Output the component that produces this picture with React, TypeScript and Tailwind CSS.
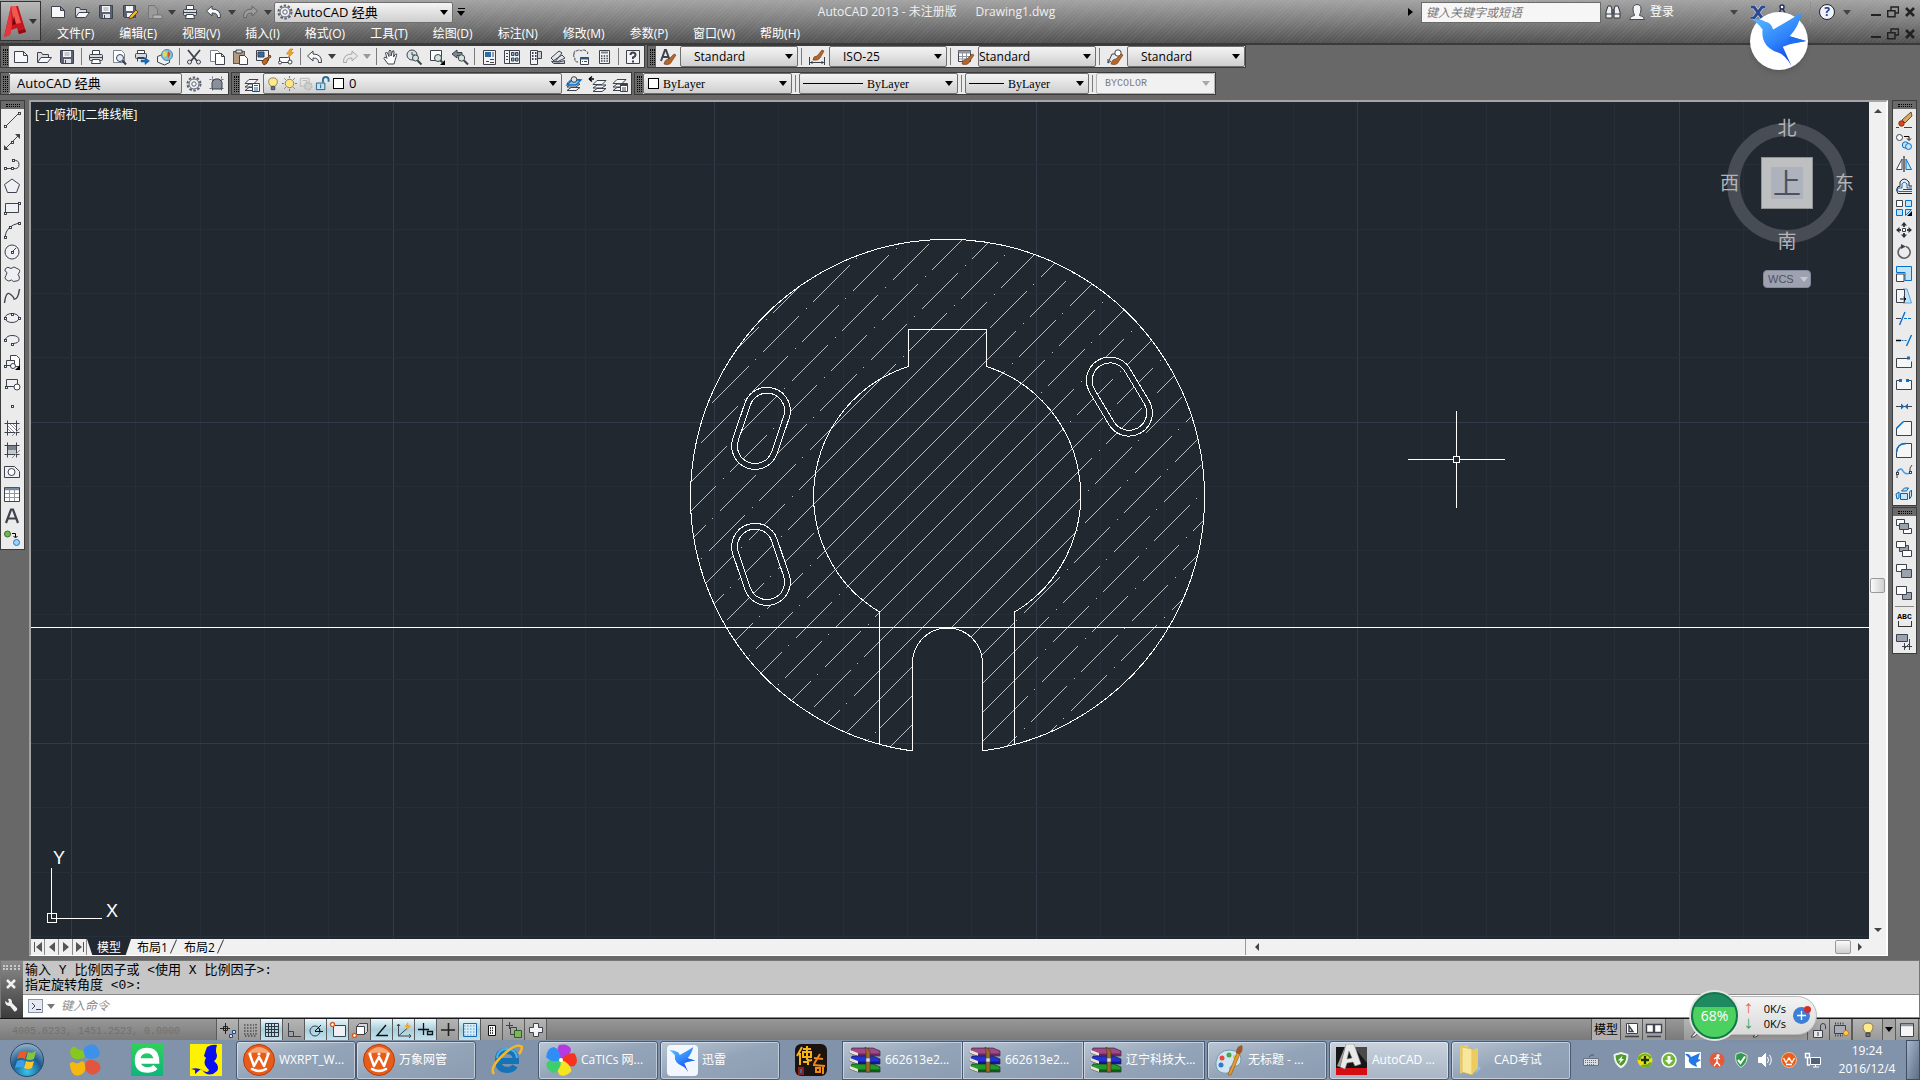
import type { ReactNode } from "react";
import { clsx } from "clsx";

const icons: Record<string, ReactNode> = {
  new: <path d="M1.5 2.5h9l4 4v7h-13zM10.5 2.5v4h4" fill="#f7f8fa" />,
  open: (
    <>
      <path d="M1.5 13V3.5h4l1 2h6V8" fill="#d9dde3" />
      <path d="M1.5 13.5L5 8.5h10.500l-4 5z" fill="#f7f8fa" />
    </>
  ),
  save: (
    <>
      <path d="M1.500 1.500h13v13h-12l-1-1z" fill="#5a6170" />
      <path d="M4 2h8v6H4z" fill="#f3f4f6" stroke="none" />
      <path d="M5.500 4h5M5.500 6h5" stroke="#9aa0aa" />
      <path d="M5 10h7v4H5z" fill="#dfe2e7" stroke="none" />
      <path d="M6.500 11v3" />
    </>
  ),
  saveas: (
    <>
      <path d="M1.500 1.500h12v12h-11l-1-1z" fill="#5a6170" />
      <path d="M4 2h7v5H4zM5 9h5v4H5z" fill="#f3f4f6" stroke="none" />
      <path d="M7 15l1-3 6-6 2 2-6 6z" fill="#f2b92d" stroke="#7a4a12" />
    </>
  ),
  plotoff: (
    <>
      <path d="M2.500 1.500h6l3 4v9h-9z" fill="#9b9b9b" stroke="#767676" />
      <path d="M7 11h9v3.500H7z" fill="#b4b4b4" stroke="#767676" />
    </>
  ),
  print: (
    <>
      <path d="M4.500 5V1.500h7V5" fill="#fff" />
      <rect x="1.500" y="5.500" width="13" height="6" rx="1" fill="#d5d8de" />
      <path d="M1.500 8.500h13" />
      <path d="M3.500 14.500l1-4h7l1 4z" fill="#fff" />
    </>
  ),
  preview: (
    <>
      <path d="M2.500 1.500h8l3 3v9h-11z" fill="#fff" stroke="#7d828c" />
      <circle cx="9" cy="9" r="3.500" fill="#dceefb" />
      <path d="M11.500 11.500l3.500 4" strokeWidth="2" />
    </>
  ),
  publish: (
    <>
      <path d="M3.500 4V1.500h7V4" fill="#fff" />
      <rect x="1.500" y="4.500" width="11" height="5" rx="1" fill="#d5d8de" />
      <path d="M3.500 12.500v-4h7" />
      <path d="M7 11h4V8.500l4.500 3.500-4.500 3.500V13H7z" fill="#0a6fc9" stroke="#07549a" strokeWidth=".5" />
    </>
  ),
  globe: (
    <>
      <path d="M.500 7.500l5-2 7 3v5l-5 2.500-7-3z" fill="#eef0f3" />
      <circle cx="10" cy="6" r="5.500" fill="#7fc4e6" stroke="#4a88a8" />
      <path d="M6 3q3-2 4 1t-3 4q-2-2-1-5z" fill="#e4d94b" stroke="none" />
      <path d="M11 2q3 2 2 4l-2 4q-1-4 0-8z" fill="#d9512e" stroke="none" />
    </>
  ),
  cut: (
    <>
      <path d="M2 1l9 11M14 1L5 12" strokeWidth="1.800" />
      <circle cx="3.500" cy="13" r="2" />
      <circle cx="12.500" cy="13" r="2" />
    </>
  ),
  copy: (
    <>
      <path d="M1.500 1.500h7l2 2v9h-9z" fill="#fff" stroke="#7d828c" />
      <path d="M6.500 4.500h6l3 3v8h-9zM12.500 4.500v3h3" fill="#fff" />
    </>
  ),
  paste: (
    <>
      <rect x="1.500" y="2.500" width="11" height="12" fill="#b39a7d" stroke="#6b5844" />
      <path d="M4 1h6v3H4z" fill="#dfe2e7" />
      <path d="M7.500 6.500h5l3 3v6h-8z" fill="#fff" />
    </>
  ),
  match: (
    <>
      <path d="M1.500 1.500h12v10h-12z" fill="#eceff3" />
      <path d="M3 3h6v5H3z" fill="#2f6da8" />
      <path d="M7 13q3-5 5-4l3-3 1 2-3 2q0 5-4 6z" fill="#c06a24" stroke="#7d3f10" />
    </>
  ),
  block: (
    <>
      <path d="M1.500 8.500h10v5h-10z" fill="#fff" />
      <circle cx="12" cy="13" r="2" fill="#fff" />
      <circle cx="2" cy="13.500" r="1.500" fill="#fff" />
      <path d="M12 0L8.500 5h3L10 9l5.500-5.500h-3L15 0z" fill="#f5a623" stroke="#c9730f" strokeWidth=".6" />
    </>
  ),
  undo: <path d="M.500 7L6 2v3q9 0 8.500 8.500h-3Q12 9 6 9v3z" fill="#f7f8fa" />,
  redo: <path d="M15.500 7L10 2v3Q1 5 1.500 13.500h3Q4 9 10 9v3z" fill="#e8e8e8" stroke="#a7a7a7" />,
  redodark: <path d="M15.500 7L10 2v3Q1 5 1.500 13.500h3Q4 9 10 9v3z" fill="#9c9c9c" stroke="#666" />,
  pan: (
    <path
      d="M5 15L1 9.500q0-2 2-1l1 1L2.500 4q1-2 2 0L6 7.500V2q1-1.800 2 0v5l1.500-5q1.500-1 1.500 1l-.500 5 2-3q2-.500 1 1.500L12 11.500 11 15z"
      fill="#fff"
    />
  ),
  zoomrt: (
    <>
      <circle cx="6" cy="6" r="5" fill="#d8e3ea" />
      <path d="M6 3v3h3" />
      <circle cx="9.500" cy="9" r="3" fill="#cfe8d8" />
      <path d="M11.500 11.500l4 4" strokeWidth="2" />
    </>
  ),
  zoomwin: (
    <>
      <path d="M1.500 1.500h11v10h-11z" fill="#fff" />
      <circle cx="9" cy="9" r="3.500" fill="#cfe8d8" />
      <path d="M11.500 11.500l2 2" strokeWidth="2" />
      <path d="M16 11v5h-5z" fill="#000" stroke="none" />
    </>
  ),
  zoomprev: (
    <>
      <path d="M0 5l5-4v2.500h5v3H5V9z" fill="#7f858f" />
      <circle cx="9.500" cy="9" r="3.200" fill="#cfe8d8" />
      <path d="M12 11.500l4 4" strokeWidth="2" />
    </>
  ),
  props: (
    <>
      <path d="M2.500 1.500h12v14h-12z" fill="#f3f4f6" />
      <path d="M4 3h6v5H4z" fill="#2f6da8" stroke="none" />
      <path d="M12 3v5M5 12.500h3M9 10.500h4M9 13.500h4" />
    </>
  ),
  dcenter: (
    <>
      <path d="M.500 1.500h15v13H.500z" fill="#f3f4f6" />
      <path d="M5.500 2v12M2 4.500h2M2 7.500h2M2 10.500h2" />
      <path d="M7.500 3.500h2.500v3H7.500zM11.500 3.500H14v3h-2.500zM7.500 9h2.500v3H7.500zM11.500 9H14v3h-2.500z" fill="#8ab0d0" />
    </>
  ),
  palette: (
    <>
      <path d="M3.500 1.500h7v14h-7z" fill="#f3f4f6" />
      <path d="M10.500 2.500h4v7h-4z" fill="#c8ccd3" />
      <path d="M5 4h1.500M8 4h1.500M5 7h1.500M8 7h1.500M5 10h1.500M8 10h1.500" strokeWidth="2" />
    </>
  ),
  sheet: (
    <>
      <path d="M1 9L9 2l3 2-7 9zM3 12l9-6 3 3-8 4z" fill="#e4e7eb" />
      <path d="M1.500 12.500l2 2h11v-3L9 13z" fill="#c8ccd3" />
    </>
  ),
  markup: (
    <>
      <path d="M1 5q0-4 3-3 2-2 4 0 3-2 5 0 3 1 1 4M1 5q-1 3 1 4-1 4 3 4" strokeDasharray="3 1" />
      <path d="M7.500 8.500h8v7h-8z" fill="#fff" />
      <path d="M7.500 9.500h8" stroke="#2f5b8a" strokeWidth="2" />
      <path d="M9 12.500h1M11 12.500h3" />
    </>
  ),
  calc: (
    <>
      <path d="M3.500 1.500h10v13h-10z" fill="#f3f4f6" />
      <path d="M5 3.500h7" strokeWidth="2" stroke="#7d828c" />
      <path d="M5 7h7M5 9.500h7M5 12h7" strokeDasharray="1.500 1.200" strokeWidth="1.500" />
    </>
  ),
  help: (
    <>
      <path d="M1.500 1.500h13v13h-13z" fill="#f3f4f6" />
      <path d="M5.500 6q0-2.500 2.500-2.500T10.500 6Q10.500 7.500 8 8.500V10M8 11.500v2" strokeWidth="2" />
    </>
  ),
  textstyle: (
    <>
      <path d="M1 12L5 1h1l4 11M3 8h5" strokeWidth="2" />
      <Brush />
    </>
  ),
  dimstyle: (
    <>
      <path d="M.500 8v8M15.500 8v8M1 13.500h14M3 12v3M13 12v3" />
      <path d="M4 11q0-4 4-4l5-6 2 1-4 7q-2 3-7 2z" fill="#b4672c" stroke="#6d3711" strokeWidth=".6" />
    </>
  ),
  tablestyle: (
    <>
      <path d="M.500 1.500h12v11H.500z" fill="#fff" />
      <path d="M.500 3h12" strokeWidth="3" stroke="#9298a2" />
      <path d="M1 7.500h11M1 10h11M4.500 4v8M8.500 4v8" stroke="#9298a2" />
      <Brush />
    </>
  ),
  leaderstyle: (
    <>
      <path d="M1 14L5 5h4M1 14v-4M1 14l3-2" />
      <circle cx="11" cy="4" r="3.200" fill="#fff" />
      <Brush />
    </>
  ),
  gear: (
    <>
      <circle cx="8" cy="8" r="6.500" strokeWidth="2" strokeDasharray="2.400 1.680" stroke="#596070" />
      <circle cx="8" cy="8" r="5" fill="#f1f2f4" stroke="#596070" />
      <circle cx="8" cy="8" r="2.200" fill="#fafafa" stroke="#596070" />
    </>
  ),
  wssettings: (
    <>
      <path d="M.500 3.500h15M.500 12.500h15M3.500.500v15M12.500.500v15" strokeDasharray="2 1" stroke="#6c717b" />
      <path d="M3 13V6l3-3h4l3 3v7z" fill="#8a909b" />
    </>
  ),
  layerprops: (
    <>
      <Layers />
      <path d="M8.500 7.500h7v8h-7z" fill="#fff" />
      <path d="M10 9.500h4M10 12h4M10 14h4" stroke="#0a6fc9" />
    </>
  ),
  bulb: (
    <>
      <path d="M8 1q5 0 5 4.500 0 2-2.500 5h-5Q3 7.500 3 5.500 3 1 8 1z" fill="#ffe98a" stroke="#8a7c49" />
      <path d="M6 11h4v3.500H6z" fill="#6a7382" />
    </>
  ),
  sun: (
    <>
      <circle cx="8" cy="8" r="4.500" fill="#ffe77d" stroke="#7d8087" />
      <path d="M8 0v2M8 14v2M0 8h2M14 8h2M2.500 2.500L4 4M12 12l1.500 1.500M13.500 2.500L12 4M2.500 13.500L4 12" stroke="#7d6d3a" />
    </>
  ),
  vpfreeze: (
    <g stroke="#b5b5b5">
      <path d="M1.500 1.500h10v8h-3M1.500 1.500v9h4M4 4h5v4" />
      <circle cx="10.500" cy="10.500" r="4" fill="#cfcfcf" strokeDasharray="2 1" strokeWidth="2" />
    </g>
  ),
  unlock: (
    <>
      <path d="M8.500 7V4q0-3 3-3t3 3v2" strokeWidth="2" stroke="#2d6d92" />
      <path d="M1.500 7.500h9v7h-9z" fill="#bfe4f7" stroke="#1c5f88" />
      <path d="M6 9v4" stroke="#1c5f88" />
    </>
  ),
  layercur: (
    <>
      <Layers />
      <path d="M1 9l5-5h9l-5 5z" fill="#8cc7ee" stroke="#0a6fc9" strokeWidth="1.300" />
      <circle cx="8" cy="3.500" r="2.800" fill="#e0e3e8" />
    </>
  ),
  layerprev: (
    <>
      <g transform="translate(3 1)">
        <Layers />
      </g>
      <path d="M0 3h5M0 3l3-2.500M0 3l3 2.500" stroke="#000" strokeWidth="1.400" />
    </>
  ),
  layerstate: (
    <>
      <Layers />
      <path d="M8.500 7.500h7v8h-7z" fill="#fff" />
      <path d="M8.500 9h7" strokeWidth="2" />
      <path d="M10 12h4M10 14h4" />
    </>
  ),
  line: (
    <>
      <path d="M2 14L14 2" />
      <Node x={1} y={14} />
      <Node x={15} y={1} />
    </>
  ),
  xline: (
    <>
      <path d="M1 15L15 1" />
      <path d="M0 11v5h5zM11 0h5v5z" fill="#3d424d" stroke="none" />
      <Node x={8} y={8} />
    </>
  ),
  pline: (
    <>
      <path d="M1 12.500h8M9 4.500q6-1 6 4t-6 4" />
      <Node x={1} y={12} />
      <Node x={8} y={12} />
      <Node x={9} y={4} />
    </>
  ),
  polygon: <path d="M8 1l7.500 5.500-3 8h-9l-3-8z" fill="#eef0f3" />,
  rect: (
    <>
      <path d="M1.500 3.500h13v9h-13z" fill="#eef0f3" />
      <Node x={1} y={13} />
      <Node x={15} y={3} />
    </>
  ),
  arc: (
    <>
      <path d="M1 15Q2 4 15 1" />
      <Node x={1} y={15} />
      <Node x={6} y={5} />
      <Node x={15} y={1} />
    </>
  ),
  circle: (
    <>
      <circle cx="8" cy="8" r="7" fill="#eef0f3" />
      <path d="M8 8l4-4" />
      <Node x={8} y={8} />
    </>
  ),
  cloud: (
    <path
      d="M3 6.500Q-.500 5 1.500 2.500T7 2.500q3-3 6 0 4 1 2 4.500-2 1.500 0 3 1.500 5-3 5-3 1.500-4.500-1-3 2-5 0Q-.500 12 2 9.500z"
      fill="#eef0f3"
    />
  ),
  spline: <path d="M.500 15Q2 3 6 6t4 5q4 1 5.500-10" strokeWidth="1.400" />,
  ellipse: (
    <>
      <ellipse cx="8" cy="8" rx="7" ry="4.500" fill="#eef0f3" />
      <Node x={1} y={8} />
      <Node x={8} y={4} />
      <Node x={15} y={8} />
    </>
  ),
  earc: (
    <>
      <path d="M1 8q2-5 8-4.500t6 4.500q0 3-6 3.500" fill="#eef0f3" />
      <Node x={1} y={8} />
      <Node x={8} y={12} />
    </>
  ),
  insert: (
    <>
      <path d="M6.500 1.500h6l3 3v8h-9z" fill="#fff" />
      <path d="M2.500 6.500h8v5h-8z" fill="#eef0f3" />
      <circle cx="9" cy="12" r="2.500" fill="#fff" />
      <Node x={1} y={12} />
      <path d="M16 11v5h-5z" fill="#000" stroke="none" />
    </>
  ),
  mkblock: (
    <>
      <path d="M2.500 3.500h11v7h-11z" fill="#eef0f3" />
      <circle cx="13" cy="11" r="3" fill="#fff" />
      <Node x={2} y={11} />
    </>
  ),
  point: <Node x={8} y={8} />,
  hatch: (
    <>
      <path d="M3.500 3.500h9v9h-9z" fill="#fff" />
      <path d="M4 6l6 6M4 9l3 3M6 4l6 6M9 4l3 3" stroke="#8b909a" />
      <path d="M.500 3.500h15M.500 12.500h15M3.500.500v15M12.500.500v15" />
      <path d="M16 8l-8 8" stroke="#8b909a" />
    </>
  ),
  gradient: (
    <>
      <path d="M3 3h10v5H3z" fill="#7c828d" stroke="none" />
      <path d="M3 8h10v5H3z" fill="#c3c8cf" stroke="none" />
      <path d="M.500 3.500h15M.500 12.500h15M3.500.500v15M12.500.500v15" />
      <path d="M16 8l-8 8" stroke="#8b909a" />
    </>
  ),
  region: (
    <>
      <path d="M.500 2.500h10l5 5v6H.500z" fill="#eef0f3" />
      <circle cx="7.500" cy="8" r="3.500" fill="#fff" />
    </>
  ),
  table: (
    <>
      <path d="M.500 1.500h15v14H.500z" fill="#fff" />
      <path d="M1 3h14" strokeWidth="2.500" stroke="#7688a2" />
      <path d="M1 7.500h14M1 11.500h14M5.500 4v11M10.500 4v11" stroke="#9298a2" />
    </>
  ),
  mtext: <path d="M2 15L7 1.500h2L14 15M4.500 10.500h7" strokeWidth="2.200" />,
  addsel: (
    <>
      <circle cx="3.500" cy="4" r="3" fill="#72b558" stroke="#386d24" />
      <circle cx="12.500" cy="12.500" r="3" fill="#9ad3f7" stroke="#1f7ac0" />
      <path d="M8 3.500h3.500V7M9.500 6l2 2 2-2" stroke="#000" />
    </>
  ),
  erase: (
    <>
      <path d="M15 0l1 4-7 7-3-3z" fill="#d9a766" stroke="#6f4b1d" />
      <circle cx="5.500" cy="11.500" r="2.700" fill="#d5481b" stroke="#8e2b0b" />
      <path d="M0 15.500h3M8 15.500h8" />
    </>
  ),
  copyobj: (
    <>
      <circle cx="3.500" cy="3.500" r="3" fill="#fff" />
      <path d="M8 2.500h5v3M11 4.500l2 2 2-2" stroke="#000" />
      <circle cx="9.500" cy="11" r="3.200" fill="#bfe4f7" stroke="#0a6fc9" />
      <circle cx="12.500" cy="12.500" r="3" fill="#bfe4f7" stroke="#0a6fc9" />
    </>
  ),
  mirror: (
    <>
      <path d="M6 3v10.500H.500z" fill="#fff" />
      <path d="M10 3v10.500h5.500z" fill="#bfe4f7" stroke="#0a6fc9" />
      <path d="M8 0v16" stroke="#000" />
    </>
  ),
  offset: (
    <>
      <path d="M16 13.500H3q-3-1-1-3.500h4V6q2-3.500 5 0v4h5" stroke="#0a6fc9" />
      <path d="M16 15.500H2q-3-4 0-7h2V4q4-6 9 0v4h3" stroke="#20242c" />
      <path d="M16 11.500H7" />
    </>
  ),
  array: (
    <>
      <path d="M.500.500h6v6h-6z" fill="#fff" />
      <path d="M9.500.500h6v6h-6zM.500 9.500h6v6h-6zM9.500 9.500h6l-6 6z" fill="#bfe4f7" stroke="#0a6fc9" />
      <path d="M16 11v5h-5z" fill="#000" stroke="none" />
    </>
  ),
  move: (
    <>
      <path d="M8 1v4M8 11v4M1 8h4M11 8h4" strokeWidth="2" />
      <path d="M5 3.500L8 0l3 3.500zM5 12.500L8 16l3-3.500zM3.500 5L0 8l3.500 3zM12.500 5L16 8l-3.500 3z" fill="#2d323c" stroke="none" />
      <path d="M6.500 6.500h3v3h-3z" fill="#fff" />
    </>
  ),
  rotate: (
    <>
      <path d="M10 2.500a6 6 0 1 1-4.500.300" strokeWidth="1.600" stroke="#5b606a" />
      <path d="M5 0l5 2.500L5 5z" fill="#3d424d" stroke="none" />
    </>
  ),
  scale: (
    <>
      <path d="M.500.500h15v14H9V6.500H.500z" fill="#bfe4f7" stroke="#0a6fc9" />
      <path d="M.500 8h7.500v7.500H.500z" fill="#fff" />
    </>
  ),
  stretch: (
    <>
      <path d="M7 1h4l4.500 14H7z" fill="#bfe4f7" stroke="#5ba3d8" />
      <path d="M.500 1.500h8v13h-8z" fill="#f5f6f8" />
      <path d="M4 11h5M7.500 9l2.500 2-2.500 2" stroke="#000" />
    </>
  ),
  trim: (
    <>
      <path d="M0 8.500h5" />
      <path d="M8 8.500h8" stroke="#0a6fc9" strokeDasharray="3 1" />
      <path d="M3.500 15L9 2" stroke="#0a6fc9" strokeWidth="1.400" />
    </>
  ),
  extend: (
    <>
      <path d="M0 8.500h5" stroke="#000" strokeWidth="1.500" />
      <path d="M5.500 8.500h6" stroke="#0a6fc9" strokeDasharray="2 1" />
      <path d="M10.500 14L15.500 3" stroke="#0a6fc9" strokeWidth="1.400" />
    </>
  ),
  breakpt: (
    <>
      <path d="M12 4.500H.500v9h15v-6" fill="#f5f6f8" />
      <path d="M11 2.500h3v3h-3z" fill="#0a6fc9" stroke="none" />
    </>
  ),
  breakln: (
    <>
      <path d="M3 4.500H.500v9h15v-9H13" fill="#f5f6f8" />
      <path d="M3 3h3v3H3zM10 3h3v3h-3z" fill="#0a6fc9" stroke="none" />
    </>
  ),
  join: (
    <>
      <path d="M0 8.500h16" />
      <path d="M5 5.500l3.500 3-3.500 3zM12 5.500l-3.500 3 3.500 3z" fill="#0a6fc9" stroke="none" />
    </>
  ),
  chamfer: (
    <>
      <path d="M.500 15.500V8l7-6.500h8v14z" fill="#f5f6f8" />
      <path d="M.500 8.500l7-7" stroke="#0a6fc9" strokeWidth="1.500" />
    </>
  ),
  fillet: (
    <>
      <path d="M.500 15.500v-5Q1 1.500 10 1.500h5.500v14z" fill="#f5f6f8" />
      <path d="M.500 10.500Q1 1.500 10 1.500" stroke="#0a6fc9" strokeWidth="1.500" />
    </>
  ),
  blend: (
    <>
      <path d="M1 14V8l2-3M14 10V4l2-3" />
      <path d="M2 7q3-4 5 0t7 2" stroke="#3f9bea" strokeWidth="1.500" />
      <Node x={1} y={9} />
      <Node x={14} y={8} />
    </>
  ),
  explode: (
    <path d="M4.500 7.500h7v6h-7zM5.500 5l3-3h4l-2 3zM13.500 6l2-2v6l-2 3zM0 8l3-2v6l-2 1z" fill="#c4e8fa" stroke="#0a62a8" />
  ),
  front: (
    <>
      <path d="M.500.500h8v6h-8zM7.500 9.500h8v5h-8z" fill="#fff" />
      <path d="M3.500 4.500h9v6h-9z" fill="#9aa2ad" />
    </>
  ),
  back: (
    <>
      <path d="M3.500 4.500h9v6h-9z" fill="#9aa2ad" />
      <path d="M.500.500h9v6h-9zM6.500 9.500h9v6h-9z" fill="#fff" />
    </>
  ),
  above: (
    <>
      <path d="M.500 1.500h10v7h-10z" fill="#fff" />
      <path d="M5.500 6.500h10v8h-10z" fill="#9aa2ad" />
    </>
  ),
  under: (
    <>
      <path d="M6.500 7.500h9v7h-9z" fill="#9aa2ad" />
      <path d="M.500 1.500h10v8h-10z" fill="#fff" />
    </>
  ),
  hatchback: (
    <>
      <path d="M.500.500h11v7h-11z" fill="#9aa2ad" />
      <path d="M6 12.500h10M8.500 9v7M13.500 5v11M8 15l6-6" />
    </>
  ),
  infer: (
    <>
      <path d="M0 6.500h10M5.500 1v11M3.500 4.500h4v4h-4z" stroke="#222" />
      <path d="M9.500 12.500h3v3h-3zM12.500 8.500h3v3h-3z" fill="#d5e4f5" stroke="#234a7d" />
    </>
  ),
  snap: <path d="M2 3h10M2 6h10M2 9h10M2 12h10M14 2v11M3 14h11" strokeDasharray="1.500 1.500" stroke="#222" />,
  grid: <path d="M1.500 1.500h13v13h-13zM4.500 1v14M7.500 1v14M10.500 1v14M1 4.500h14M1 7.500h14M1 10.500h14" stroke="#30343c" />,
  ortho: <path d="M2.500 1v13.500H15M2.500 9.500h5v5" />,
  polar: (
    <>
      <circle cx="7" cy="9" r="5" />
      <path d="M7 9l6-6M7 9.500h8M10.500 5.500q1.500 2 1 4" stroke="#111" />
    </>
  ),
  osnap: (
    <>
      <path d="M3.500 3.500h12v11h-12z" fill="#eef0f3" />
      <circle cx="2.500" cy="2.500" r="2" fill="#fff" stroke="#d65a1f" strokeWidth="1.400" />
    </>
  ),
  osnap3d: (
    <>
      <path d="M4.500 4.500l3-3h8v8l-3 3h-8z" fill="#d5d8de" />
      <path d="M4.500 4.500h8v8h-8z" fill="#fff" />
      <circle cx="2.500" cy="13.500" r="2" fill="#fff" stroke="#d65a1f" strokeWidth="1.400" />
    </>
  ),
  otrack: <path d="M12 3L3 13.500h11" stroke="#111" strokeWidth="1.400" />,
  ducs: (
    <>
      <path d="M2.500 2v12h12M1 4l1.500-2L4 4M2.500 14l9-8M13 12l2 2-2 2" />
      <path d="M12 0L8.500 5h3L10 9l5.500-5.500h-3z" fill="#f5a623" stroke="none" />
    </>
  ),
  dyn: <path d="M5.500 1v12M0 7.500h11M9.500 9.500h5v3h-5z" stroke="#111" strokeWidth="1.300" />,
  lwt: <path d="M8.500 1v13M1 8h14" stroke="#222" strokeWidth="1.600" />,
  tpy: (
    <>
      <path d="M1.500 1.500h13v13h-13z" fill="#d9edf9" stroke="#1b68b3" />
      <path d="M2 4h12M2 7h12M2 10h12M2 13h12" stroke="#7fb2dc" strokeWidth="1.500" strokeDasharray="1.500 1.500" />
    </>
  ),
  qp: (
    <>
      <path d="M4.500 3.500h7v10h-7z" fill="#fff" stroke="#111" />
      <path d="M6 6h4M6 8.500h4M6 11h4" stroke="#111" strokeDasharray="1 1" strokeWidth="1.400" />
    </>
  ),
  cycle: (
    <>
      <path d="M3.500 0v7M0 3.500h7" />
      <path d="M4.500 5.500h6v7h-6z" />
      <path d="M8.500 8.500h7v7h-7z" fill="#7fb562" stroke="#2c6417" />
    </>
  ),
  annomon: <path d="M5.500 1.500h5v4h4v5h-4v4h-5v-4h-4v-5h4z" fill="#f3f4f6" />,
  qvl: (
    <>
      <path d="M2.500 1.500h11v10h-11z" fill="#fff" />
      <path d="M5 9.500V4l4 5.500zM1 14.500h14" strokeWidth="1.400" />
    </>
  ),
  qvd: <path d="M.500 2.500h7v8h-7zM8.500 2.500h7v8h-7zM1 14.500h14" fill="#fff" strokeWidth="1.400" />,
  padlock: (
    <>
      <path d="M9.500 8V4q0-2.500 2.500-2.500T14.500 4v3" />
      <path d="M2.500 8.500h9v7h-9z" fill="#e6e8ec" />
      <path d="M7 10v4" />
    </>
  ),
  hardware: (
    <>
      <path d="M1.500 3.500h11v8h-11z" fill="#a7adb7" />
      <path d="M2 1.500h10M2 13.500h8" strokeDasharray="1 1.500" strokeWidth="2" />
      <circle cx="13" cy="11" r="2.500" fill="#ffcf55" stroke="#c47b10" />
    </>
  ),
  clean: (
    <>
      <path d="M1.500 1.500h13v13h-13z" fill="#f5f5f5" />
      <path d="M2 3h12" strokeWidth="2.500" stroke="#9298a2" />
    </>
  ),
  tool: <path d="M2 15L12 3l3 3-10 9z" fill="#e6e8ec" />,
  keyboard: (
    <>
      <path d="M6 5q2-3 5-2" stroke="#4b5563" />
      <path d="M.500 6.500h15v7H.500z" fill="#d9dde4" stroke="#6c7380" />
      <path d="M2 8.500h12M2 10.500h12M4 12.500h8" stroke="#6c7380" strokeDasharray="1 1" />
    </>
  ),
  shield: (
    <>
      <path d="M8 .500l7 2q0 10-7 13.500Q1 12.500 1 2.500z" fill="#fff" stroke="#e5efe5" />
      <path d="M8 2l5.500 1.500Q13.500 11 8 14 2.500 11 2.500 3.500z" fill="#4e9a2c" stroke="none" />
      <path d="M9.500 3.500L5 8.500h2.500L6 12l5-5H8.500z" fill="#fff" stroke="none" />
    </>
  ),
  plus360: (
    <>
      <circle cx="8" cy="8" r="7.500" fill="#f4d91c" stroke="none" />
      <path d="M1 5Q8-2 15 5q-4 4-5 3H1zM3 14q5-3 12-4-2 6-7 5.500z" fill="#67b21e" stroke="none" />
      <circle cx="8" cy="8" r="4.500" fill="#f4e03a" stroke="none" />
      <path d="M8 4v8M4 8h8" stroke="#14380a" strokeWidth="2.400" />
    </>
  ),
  download: (
    <>
      <circle cx="8" cy="8" r="7" fill="#6fb832" stroke="#f4faee" strokeWidth="1.600" />
      <path d="M6.500 4h3v4H12l-4 4.500L4 8h2.500z" fill="#fff" stroke="none" />
    </>
  ),
  birdtray: (
    <>
      <path d="M0 0h16v16H0z" fill="#fff" stroke="none" />
      <path d="M0 2q4-1 6 3l9-4-2 6 3 1-5 3 1 4Q2 12 4 6z" fill="#2278e8" stroke="none" />
    </>
  ),
  runner: (
    <>
      <circle cx="8" cy="8" r="7.500" fill="#e4593a" stroke="none" />
      <circle cx="9" cy="3.500" r="1.600" fill="#fff" stroke="none" />
      <path d="M5 7l3-2 3 2M8 5v5l-3 4M8 10l3 4" stroke="#fff" strokeWidth="1.300" />
    </>
  ),
  guard: (
    <>
      <path d="M3 2l5-1.500L14 3q1 8-6 12.500Q1 11 3 2z" fill="#2f9a4b" stroke="#d6e3d8" />
      <path d="M5 8l2.500 3L12 4.500" stroke="#fff" strokeWidth="2" />
    </>
  ),
  speaker: (
    <g stroke="#fff">
      <path d="M1.500 5.500h3l4-4v13l-4-4h-3z" fill="#fff" />
      <path d="M10.500 5q2 3 0 6M12.500 3q3.500 5 0 10" />
    </g>
  ),
  wtray: (
    <>
      <circle cx="8" cy="8" r="7.500" fill="#e9601c" stroke="#f6b38c" />
      <path d="M2.500 6L5 10.500 8 6l3 4.500L13.500 6M5 12.500h6" stroke="#fff" strokeWidth="1.300" />
    </>
  ),
  network: (
    <g stroke="#fff">
      <path d="M5.500 5.500h10v7h-10zM8 15h6M10.500 13v2" fill="#4f6277" />
      <path d="M.500 1.500h4v4h-4zM2.500 6v7H5" strokeWidth="1.400" />
    </g>
  ),
};

function Brush() {
  return <path d="M4 15q1-5 5-5l5-5 2 1-4 6q-2 5-8 3z" fill="#b4672c" stroke="#6d3711" strokeWidth=".6" />;
}

function Layers() {
  return (
    <g fill="#f5f6f8">
      <path d="M1 14.500l4-3h9l-4 3z" />
      <path d="M1 11l4-3h9l-4 3z" />
      <path d="M1 7.500l4-4h9l-4 4z" />
    </g>
  );
}

function Node({ x, y }: { x: number; y: number }) {
  return <rect x={x - 0.5} y={y - 0.5} width="2" height="2" fill="#fff" stroke="#2d323c" strokeWidth=".9" />;
}

const Icon = ({ name, className = "size-4" }: { name: string; className?: string }) => (
  <svg viewBox="0 0 16 16" fill="none" stroke="#3d424d" className={clsx("shrink-0 overflow-visible", className)} aria-hidden="true">
    {icons[name]}
  </svg>
);

const Arrow = ({ className = "border-t-[#333]" }: { className?: string }) => (
  <span className={clsx("block size-0 border-x-4 border-t-5 border-x-transparent", className)} />
);

const GripH = () => (
  <div className="flex w-2 shrink-0 items-center justify-center gap-px self-stretch bg-[#6a6a6a]">
    <span className="h-4 border-l border-dotted border-black" />
    <span className="h-4 border-l border-dotted border-black" />
    <span className="h-4 border-l border-dotted border-black" />
  </div>
);

const GripV = () => (
  <div className="flex h-2 shrink-0 flex-col items-center justify-center gap-px bg-[#6a6a6a]">
    <span className="w-[14px] border-t border-dotted border-black" />
    <span className="w-[14px] border-t border-dotted border-black" />
  </div>
);

const Sep = ({ className = "w-[6px]" }: { className?: string }) => (
  <div className={clsx("flex shrink-0 justify-center self-stretch py-[2px]", className)}>
    <span className="w-px bg-[#7c7c7c]" />
  </div>
);

const Tool = ({ name, className = "w-[23px]" }: { name: string; className?: string }) => (
  <button type="button" aria-label={name} className={clsx("flex shrink-0 items-center justify-center self-stretch", className)}>
    <Icon name={name} />
  </button>
);

const Drop = ({ name, className = "border-t-[#3c3c3c]" }: { name: string; className?: string }) => (
  <button type="button" aria-label={name} className="flex w-3 shrink-0 items-center justify-center">
    <Arrow className={clsx("border-x-3 border-t-4", className)} />
  </button>
);

const Toolbar = ({ label, children }: { label: string; children: ReactNode }) => (
  <div role="toolbar" aria-label={label} className="flex h-[23px] items-center border border-[#3c3c3c] bg-[#ebebeb]">
    {children}
  </div>
);

interface ComboProps {
  label: string;
  value: string;
  width: string;
  text?: string;
  lead?: ReactNode;
  disabled?: boolean;
}

const Combo = ({ label, value, width, text = "pl-3 text-xs", lead, disabled }: ComboProps) => (
  <div
    className={clsx(
      "relative flex h-[21px] shrink-0 items-center rounded-[2px] border",
      disabled ? "border-[#b5b5b5] bg-[#f1f1f1]" : "border-[#6f6f6f] bg-linear-to-b from-[#f4f4f4] to-[#cfcfcf]",
      width,
    )}>
    {lead}
    <select
      aria-label={label}
      disabled={disabled}
      className={clsx("h-full min-w-0 flex-1 appearance-none bg-transparent pr-4 text-black outline-none disabled:text-[#7d7d7d]", text)}>
      <option>{value}</option>
    </select>
    <span className="pointer-events-none absolute right-1">
      <Arrow className={disabled ? "border-t-[#a9a9a9]" : "border-t-black"} />
    </span>
  </div>
);

const menus = [
  "文件(F)",
  "编辑(E)",
  "视图(V)",
  "插入(I)",
  "格式(O)",
  "工具(T)",
  "绘图(D)",
  "标注(N)",
  "修改(M)",
  "参数(P)",
  "窗口(W)",
  "帮助(H)",
];

const WindowButtons = () => (
  <div className="flex w-[50px] items-center justify-between pr-1">
    <button type="button" aria-label="最小化">
      <svg viewBox="0 0 12 12" className="size-3">
        <path d="M1 8h10v2H1z" fill="#222" />
      </svg>
    </button>
    <button type="button" aria-label="还原">
      <svg viewBox="0 0 12 12" className="size-3" fill="none" stroke="#222" strokeWidth="1.500">
        <path d="M4 4V1h7.500v6H8M.700 4.700H8v6H.700z" />
      </svg>
    </button>
    <button type="button" aria-label="关闭">
      <svg viewBox="0 0 12 12" className="size-3">
        <path d="M2 2l8 8M10 2l-8 8" stroke="#222" strokeWidth="2.500" />
      </svg>
    </button>
  </div>
);

const Bird = () => (
  <svg viewBox="0 0 60 60" className="size-full">
    <defs>
      <linearGradient id="bird" x1="0" y1="0" x2=".6" y2="1">
        <stop offset="0" stopColor="#5fc4ff" />
        <stop offset=".6" stopColor="#2f83fb" />
        <stop offset="1" stopColor="#0b3de8" />
      </linearGradient>
    </defs>
    <path d="M1 7q11 0 15 3 6 1 8 8Q42 8 54 0q-4 16-13 25l17 5-16 3 -8 3 9 20Q36 44 29 42 11 36 13 18 8 11 1 7z" fill="url(#bird)" />
    <path d="M41 25l17 5-19 3z" fill="#1f6ff0" />
  </svg>
);

const Header = () => (
  <header className="flex h-[45px] shrink-0 border-b-2 border-[#3a3a3a] bg-[repeating-linear-gradient(135deg,rgba(255,255,255,.05)_0_1px,transparent_1px_3px),linear-gradient(#a3a3a3,#7d7d7d_50%,#525252)]">
    <button
      type="button"
      aria-label="应用程序菜单"
      className="mt-px flex h-10 w-[41px] shrink-0 items-center border border-[#333] bg-linear-to-b from-[#b9b9b9] to-[#7d7d7d]">
      <svg viewBox="0 0 28 36" className="h-9 w-7">
        <path d="M10 3h7l8 26-7 2-2-6-6 2-1 5-6 2z" fill="#c7161d" />
        <path d="M10 3h5l5 17-7 1z" fill="#ee5a52" />
        <path d="M13 13l2 8-4 1z" fill="#6e0a0e" />
        <path d="M3 34L10 3l1 20-2 9z" fill="#e8343a" />
        <path d="M18 31l7-2-1-3-7 2z" fill="#8d0d12" />
      </svg>
      <Arrow className="border-t-[#333]" />
    </button>
    <div className="flex min-w-0 flex-1 flex-col">
      <div className="flex h-[24px] items-center">
        <div className="flex h-full items-center pl-[5px]">
          {["new", "open", "save", "saveas", "plotoff"].map((n) => (
            <Tool key={n} name={n} className="w-6" />
          ))}
          <Drop name="打印选项" />
          <Tool name="print" className="w-6" />
          <Tool name="undo" className="w-6" />
          <Drop name="放弃列表" />
          <Tool name="redodark" className="w-6" />
          <Drop name="重做列表" />
          <Combo
            label="工作空间"
            value="AutoCAD 经典"
            width="w-[179px]"
            text="pl-px text-[13px]"
            lead={<Icon name="gear" className="ml-[2px] size-4" />}
          />
          <span className="ml-1 flex flex-col items-center gap-[2px]">
            <span className="h-px w-[7px] bg-black" />
            <Arrow className="border-t-black" />
          </span>
        </div>
        <h1 className="flex-1 text-center text-xs whitespace-pre text-[#efefef]">AutoCAD 2013 - 未注册版{"      "}Drawing1.dwg</h1>
        <div className="flex h-full items-center">
          <span className="mr-2 size-0 border-y-4 border-l-5 border-y-transparent border-l-black" />
          <input
            type="search"
            aria-label="搜索"
            placeholder="键入关键字或短语"
            className="h-[21px] w-[180px] border border-[#6b6b6b] bg-[#f6f6f6] px-1 text-xs italic outline-none placeholder:text-[#777]"
          />
          <button type="button" aria-label="查找" className="flex w-6 justify-center">
            <svg viewBox="0 0 16 16" className="size-4" fill="#eef0f3" stroke="#33373f">
              <path d="M3 2h3l1 4v8H1V8zM10 2h3l2 6v6H9V6zM7 6h2v3H7z" />
              <path d="M1 10h6M9 10h6" />
            </svg>
          </button>
          <button type="button" className="flex items-center gap-[5px] pl-1 text-xs text-white">
            <svg viewBox="0 0 16 16" className="size-4" fill="#f3f4f6" stroke="#444953">
              <path d="M.500 15.500q1-4 5-4 0-1-1-3-2-8 3.500-8t3.500 8q-1 2-1 3 4 0 5 4z" />
            </svg>
            登录
          </button>
          <span className="ml-[56px] flex items-center gap-2">
            <Arrow className="border-x-3 border-t-4 border-t-[#444]" />
            <button type="button" aria-label="Exchange" className="ml-1">
              <svg viewBox="0 0 16 16" className="size-4" fill="none" strokeWidth="4">
                <path d="M1 3h3l8 11h3M1 14h3l8-11h3" stroke="#dfe6f5" />
                <path d="M1 3h3l8 11h3M1 14h3l8-11h3" stroke="#2c4a94" strokeWidth="3" />
              </svg>
            </button>
            <button type="button" aria-label="Autodesk 360">
              <svg viewBox="0 0 16 16" className="size-4" fill="none" stroke="#26335c" strokeWidth="1.500">
                <circle cx="8" cy="3" r="2" fill="#fff" />
                <path d="M7 5L2 15M9 5l5 10M4 11q4 3 8 0" />
              </svg>
            </button>
            <span className="ml-3 h-5 w-px bg-[#8d8d8d]" />
            <button type="button" aria-label="帮助" className="flex size-4 items-center justify-center rounded-full border border-[#222] bg-[#eef3fb] text-xs font-bold text-[#1c3f94]">
              ?
            </button>
            <Arrow className="border-x-3 border-t-4 border-t-[#444]" />
          </span>
          <span className="w-[19px]" />
          <WindowButtons />
        </div>
      </div>
      <div className="flex flex-1 items-center justify-between">
        <nav className="flex h-full items-center gap-[25px] pl-4 text-xs text-white">
          {menus.map((m) => (
            <button type="button" key={m}>
              {m}
            </button>
          ))}
        </nav>
        <WindowButtons />
      </div>
    </div>
  </header>
);

const standardTools = [
  ["new", "open", "save"],
  ["print", "preview", "publish", "globe"],
  ["cut", "copy", "paste", "match", "block"],
];

const styleCombos = [
  { icon: "textstyle", label: "文字样式", value: "Standard", text: "pl-[13px] text-xs" },
  { icon: "dimstyle", label: "标注样式", value: "ISO-25", text: "pl-[13px] text-xs" },
  { icon: "tablestyle", label: "表格样式", value: "Standard", text: "text-xs" },
  { icon: "leaderstyle", label: "多重引线样式", value: "Standard", text: "pl-[13px] text-xs" },
];

const Toolbars = () => (
  <div className="flex shrink-0 flex-col gap-1 pb-[5px]">
    <div className="flex gap-[2px]">
      <Toolbar label="标准">
        <GripH />
        {standardTools.map((group, i) => (
          <div key={i} className="flex h-full items-center">
            {group.map((n) => (
              <Tool key={n} name={n} />
            ))}
            <Sep />
          </div>
        ))}
        <Tool name="undo" />
        <Drop name="放弃列表" />
        <Tool name="redo" />
        <Drop name="重做列表" className="border-t-[#999]" />
        <Sep />
        {["pan", "zoomrt", "zoomwin", "zoomprev"].map((n) => (
          <Tool key={n} name={n} />
        ))}
        <Sep />
        {["props", "dcenter", "palette", "sheet", "markup", "calc"].map((n) => (
          <Tool key={n} name={n} />
        ))}
        <Sep />
        <Tool name="help" />
      </Toolbar>
      <Toolbar label="样式">
        <GripH />
        {styleCombos.map((c, i) => (
          <div key={c.label} className="flex h-full items-center">
            {i > 0 && <Sep className="w-[7px]" />}
            <Tool name={c.icon} className="w-6" />
            <Combo label={c.label} value={c.value} width="w-[118px]" text={c.text} />
          </div>
        ))}
      </Toolbar>
    </div>
    <div className="flex gap-[2px]">
      <Toolbar label="工作空间">
        <GripH />
        <Combo label="工作空间" value="AutoCAD 经典" width="w-[173px]" text="pl-[7px] text-[13px]" />
        <Tool name="gear" />
        <Tool name="wssettings" />
      </Toolbar>
      <Toolbar label="图层">
        <GripH />
        <Tool name="layerprops" />
        <Combo
          label="图层"
          value="0"
          width="w-[299px]"
          text="pl-[5px] text-[13px]"
          lead={
            <span className="flex items-center gap-[2px] pl-[2px]">
              <Icon name="bulb" className="size-[14px]" />
              <Icon name="sun" className="size-[15px]" />
              <Icon name="vpfreeze" className="size-[14px]" />
              <Icon name="unlock" className="size-[15px]" />
              <span className="ml-px size-[11px] border border-black bg-white" />
            </span>
          }
        />
        {["layercur", "layerprev", "layerstate"].map((n) => (
          <Tool key={n} name={n} />
        ))}
      </Toolbar>
      <Toolbar label="特性">
        <GripH />
        <Combo
          label="颜色"
          value="ByLayer"
          width="w-[149px]"
          text="pl-[4px] text-xs font-['Liberation_Serif',serif]"
          lead={<span className="ml-1 size-[11px] border border-black bg-white" />}
        />
        <Sep className="w-[7px]" />
        <Combo
          label="线型"
          value="ByLayer"
          width="w-[159px]"
          text="pl-[4px] text-xs font-['Liberation_Serif',serif]"
          lead={<span className="ml-[3px] h-px w-[60px] bg-black" />}
        />
        <Sep className="w-[7px]" />
        <Combo
          label="线宽"
          value="ByLayer"
          width="w-[124px]"
          text="pl-[4px] text-xs font-['Liberation_Serif',serif]"
          lead={<span className="ml-[3px] h-px w-[35px] bg-black" />}
        />
        <Sep className="w-[7px]" />
        <Combo label="打印样式" value="BYCOLOR" width="w-[119px]" text="pl-2 text-[10px] font-['Liberation_Mono',monospace]" disabled />
      </Toolbar>
    </div>
  </div>
);

const drawTools = [
  "line", "xline", "pline", "polygon", "rect", "arc", "circle", "cloud", "spline", "ellipse",
  "earc", "insert", "mkblock", "point", "hatch", "gradient", "region", "table", "mtext", "addsel",
];

const modifyTools = [
  "erase", "copyobj", "mirror", "offset", "array", "move", "rotate", "scale", "stretch",
  "trim", "extend", "breakpt", "breakln", "join", "chamfer", "fillet", "blend", "explode",
];

const SideBar = ({ label, children }: { label: string; children: ReactNode }) => (
  <div role="toolbar" aria-label={label} className="flex w-[25px] flex-col border border-[#3c3c3c] bg-[#ebebeb]">
    <GripV />
    {children}
  </div>
);

const SideTool = ({ name }: { name: string }) => (
  <button type="button" aria-label={name} className="flex h-[22px] items-center justify-center pr-[2px]">
    <Icon name={name} />
  </button>
);

// grid spacing in drawing pixels, every fifth line is a major one
const GRID = 64.3;
const gridX = Array.from({ length: 30 }, (_, i) => ({ at: 71.5 + (i - 1) * GRID, major: (i - 1) % 5 === 0 }));
const gridY = Array.from({ length: 14 }, (_, i) => ({ at: 100.5 + i * GRID, major: i % 5 === 0 }));

const obround = (x1: number, y1: number, x2: number, y2: number, r: number) => {
  const len = Math.hypot(x2 - x1, y2 - y1);
  const nx = (-(y2 - y1) / len) * r;
  const ny = ((x2 - x1) / len) * r;
  return `M${x1 + nx} ${y1 + ny}A${r} ${r} 0 0 1 ${x1 - nx} ${y1 - ny}L${x2 - nx} ${y2 - ny}A${r} ${r} 0 0 1 ${x2 + nx} ${y2 + ny}Z`;
};

const slots = [
  [767, 410.7, 755, 446],
  [755, 546.7, 767, 582],
  [1109.8, 380.5, 1129.1, 412.7],
] as const;

const slotPath = slots.map(([a, b, c, d]) => obround(a, b, c, d, 23.4) + obround(a, b, c, d, 17.6)).join("");
const platePath = "M982.5 751A257 257 0 1 0 912.5 751V663A35 35 0 0 1 982.5 663Z";
const corePath =
  "M908.5 329.5H986.5V366.5A135.5 135.5 0 0 1 1014.5 612V744.5A257 257 0 0 1 982.5 751V663A35 35 0 0 0 912.5 663V751A257 257 0 0 1 879.5 744.5V612A135.5 135.5 0 0 1 908.5 366.5Z";

const hatchLines = Array.from({ length: 27 }, (_, i) => {
  const k = i - 4;
  const sum = 1172.7 + 29 * k;
  let x = 928.6 + 39.75 * k;
  while (x < 1210) x += 50.5;
  while (x > 1262) x -= 50.5;
  return { sum, x };
});

const Drawing = () => (
  <svg viewBox="31 102 1838 837" preserveAspectRatio="xMidYMid slice" className="absolute inset-0 size-full" fill="none">
    <defs>
      <clipPath id="plate">
        <path d={platePath + corePath + slotPath} clipRule="evenodd" />
      </clipPath>
      <clipPath id="core">
        <path d={corePath} />
      </clipPath>
    </defs>
    <g shapeRendering="crispEdges">
      {gridX.map((g) => (
        <path key={g.at} d={`M${g.at} 102V939`} stroke={g.major ? "#333a4a" : "#262e3a"} />
      ))}
      {gridY.map((g) => (
        <path key={g.at} d={`M31 ${g.at}H1869`} stroke={g.major ? "#333a4a" : "#262e3a"} />
      ))}
      <g stroke="#fff">
        <g strokeWidth=".7">
          <g clipPath="url(#plate)">
            {hatchLines.map(({ sum, x }) => (
              <path key={sum} d={`M${x} ${sum - x}L660 ${sum - 660}`} strokeDasharray="51.4 9.3 1.400 9.3" />
            ))}
          </g>
          <g clipPath="url(#core)">
            {hatchLines.map(({ sum }) => (
              <path key={sum} d={`M1210 ${sum - 1210}L660 ${sum - 660}`} />
            ))}
          </g>
        </g>
        <path d={platePath} />
        <path d={corePath} />
        <path d={slotPath} />
        <path d="M31 627.5H1869" />
        <path d="M1408 459.5H1453M1459 459.5H1505M1456.5 411V456M1456.5 462V508M1453.5 456.5h6v6h-6z" />
        <path d="M47.5 913.5h9v9h-9zM51.500 868v50.500H102" />
      </g>
    </g>
    <g fill="#fff" fontFamily="'Liberation Sans', sans-serif" fontSize="18">
      <text x="53" y="864">Y</text>
      <text x="106" y="917">X</text>
    </g>
  </svg>
);

const ViewCube = () => (
  <div className="absolute top-3 right-[15px] flex w-[134px] flex-col items-center text-[19px] leading-[22px] text-[#b4b4b4]">
    <div className="relative flex h-[138px] w-full items-center justify-between">
      <div className="absolute top-[9px] left-[7px] size-[120px] rounded-full border-[13px] border-[#484c54]" />
      <span className="absolute top-[3px] left-1/2 -translate-x-1/2">北</span>
      <span className="relative">西</span>
      <button type="button" className="relative flex size-[52px] items-center justify-center border border-[#8f9192] bg-[#bdbfc0]">
        <span className="flex size-8 items-center justify-center bg-[#aeb2bd] text-[28px] leading-8 text-[#4c5160]">上</span>
      </button>
      <span className="relative">东</span>
      <span className="absolute bottom-0 left-1/2 -translate-x-1/2">南</span>
    </div>
    <button
      type="button"
      className="mt-[18px] flex h-[18px] w-12 items-center gap-[6px] rounded-[4px] border border-[#84889a] bg-[#9da1b0] pl-1 font-['Liberation_Sans',sans-serif] text-[11px] text-[#4d5262]">
      WCS
      <Arrow className="border-t-[#c7cad6]" />
    </button>
  </div>
);

const NavButton = ({ label, d }: { label: string; d: string }) => (
  <button type="button" aria-label={label} className="flex w-[14px] items-center justify-center border-r border-[#8a8a8a] bg-[#f0f0f0]">
    <svg viewBox="0 0 10 10" className="size-[10px]">
      <path d={d} fill="#555" />
    </svg>
  </button>
);

const ModelSpace = () => (
  <main className="flex min-w-0 flex-1 flex-col border-t-2 border-r-2 border-b border-l-2 border-t-[#a5a5a5] border-r-white border-b-white border-l-[#a0a0a0]">
    <div className="flex min-h-0 flex-1">
      <div className="relative min-w-0 flex-1 overflow-hidden bg-[#212830]">
        <Drawing />
        <div className="absolute top-[5px] left-1 text-xs text-white">[−][俯视][二维线框]</div>
        <ViewCube />
      </div>
      <div className="flex w-[17px] flex-col items-center justify-between bg-[#f0f0f0] py-[7px]">
        <span className="size-0 border-x-4 border-b-4 border-x-transparent border-b-[#444]" />
        <span className="mt-auto mb-[335px] h-[15px] w-[15px] rounded-[2px] border border-[#999] bg-linear-to-r from-[#fafafa] to-[#cfcfcf]" />
        <span className="size-0 border-x-4 border-t-4 border-x-transparent border-t-[#444]" />
      </div>
    </div>
    <div className="flex h-[16px] shrink-0 bg-[#f1f1f1] text-xs leading-[15px]">
      <NavButton label="首个" d="M1 0h1v10H1zM9 0v10L3 5z" />
      <NavButton label="上一个" d="M8 0v10L2 5z" />
      <NavButton label="下一个" d="M2 0v10l6-5z" />
      <NavButton label="末个" d="M8 0h1v10H8zM1 0v10l6-5z" />
      <button type="button" className="bg-[#212830] px-[10px] text-white [clip-path:polygon(0_0,100%_0,88%_100%,12%_100%)]">
        模型
      </button>
      <button type="button" className="pl-[6px]">布局1</button>
      <span className="mx-[5px] h-[15px] w-px rotate-[24deg] bg-[#333]" />
      <button type="button" className="pl-[5px]">布局2</button>
      <span className="mx-[5px] h-[15px] w-px rotate-[24deg] bg-[#333]" />
      <div className="ml-auto flex w-[641px] items-center border-l border-[#999]">
        <span className="ml-[9px] size-0 border-y-4 border-r-4 border-y-transparent border-r-[#444]" />
        <span className="ml-auto h-[14px] w-4 rounded-[2px] border border-[#999] bg-linear-to-b from-[#fafafa] to-[#cfcfcf]" />
        <span className="mr-[24px] ml-[7px] size-0 border-y-4 border-l-4 border-y-transparent border-l-[#444]" />
      </div>
    </div>
  </main>
);

const CommandLine = () => (
  <section className="mt-1 flex shrink-0 border-x border-t border-[#777]">
    <div className="flex w-[22px] flex-col items-center justify-between bg-linear-to-b from-[#8c8c8c] to-[#3c3c3c] pt-1 pr-[2px] pb-[6px]">
      <span className="flex flex-col gap-px">
        <span className="w-[17px] border-t-2 border-dotted border-[#c9c9c9]" />
        <span className="w-[17px] border-t-2 border-dotted border-[#c9c9c9]" />
      </span>
      <button type="button" aria-label="关闭">
        <svg viewBox="0 0 10 10" className="size-[10px]">
          <path d="M1 1l8 8M9 1L1 9" stroke="#f0f0f0" strokeWidth="2.500" />
        </svg>
      </button>
      <button type="button" aria-label="自定义">
        <svg viewBox="0 0 14 14" className="size-[14px]">
          <path d="M1 3l3 2 1-1-1-3q4-1 4 4l5 5q1 2-1 3t-2 0L6 8Q1 8 1 3z" fill="#f0f0f0" />
        </svg>
      </button>
    </div>
    <div className="flex-1">
      <div className="h-[33px] bg-[#c6c6c6] pt-[2px] pl-[2px] font-['Liberation_Mono','Noto_Sans_CJK_SC',monospace] text-[13px] leading-[15px] whitespace-pre text-black">
        <p>输入 Y 比例因子或 &lt;使用 X 比例因子&gt;:</p>
        <p>指定旋转角度 &lt;0&gt;:</p>
      </div>
      <div className="flex h-6 items-center border-y border-[#8a8a8a] bg-white pl-[5px]">
        <span className="flex h-[14px] w-[15px] items-center justify-center border border-[#8b93a3] bg-[#e4e9f2]">
          <svg viewBox="0 0 12 10" className="h-[10px] w-3" fill="none" stroke="#39414f">
            <path d="M2 2l3 3-3 3M6 8.500h5" />
          </svg>
        </span>
        <Arrow className="ml-1 border-x-3 border-t-4 border-t-[#777]" />
        <input aria-label="命令" placeholder="键入命令" className="ml-[6px] flex-1 bg-transparent text-xs italic outline-none placeholder:text-[#8a8a8a]" />
      </div>
    </div>
  </section>
);

const drafting = [
  { name: "infer", on: false },
  { name: "snap", on: false },
  { name: "grid", on: true },
  { name: "ortho", on: false },
  { name: "polar", on: true },
  { name: "osnap", on: true },
  { name: "osnap3d", on: false },
  { name: "otrack", on: true },
  { name: "ducs", on: true },
  { name: "dyn", on: true },
  { name: "lwt", on: false },
  { name: "tpy", on: true },
  { name: "qp", on: false },
  { name: "cycle", on: false },
  { name: "annomon", on: false },
];

const StatusButton = ({ name, on, className = "w-[22px]" }: { name: string; on?: boolean; className?: string }) => (
  <button
    type="button"
    aria-label={name}
    aria-pressed={!!on}
    className={clsx(
      "flex items-center justify-center border-r border-[#5b5b5b]",
      on ? "bg-linear-to-b from-[#eaf6fa] via-[#a9d0de] to-[#c3e2ec]" : "bg-linear-to-b from-[#b4b4b4] to-[#9a9a9a]",
      className,
    )}>
    <Icon name={name} />
  </button>
);

const SpeedBall = () => (
  <div className="absolute right-[103px] bottom-[5px] flex h-[39px] items-center rounded-full border border-[#b8b8b8] bg-linear-to-b from-[#f4f4f4] to-[#d9d9d9] pr-[6px] shadow-md">
    <div className="-my-1 -ml-1 flex size-[47px] items-center justify-center rounded-full border-2 border-[#0e7a47] bg-linear-to-b from-[#1e8a60] from-30% to-[#4cd05f] to-30% text-sm text-white shadow ring-2 ring-[#e4e4e4]">
      68%
    </div>
    <div className="ml-[5px] grid grid-cols-[8px_34px] gap-x-px text-right text-[11px] leading-[15px] text-black">
      <span className="text-left text-[#e4593a]">↑</span>
      <span>0K/s</span>
      <span className="text-left text-[#1f9a4d]">↓</span>
      <span>0K/s</span>
    </div>
    <button type="button" aria-label="加速" className="relative ml-[7px] flex size-[17px] items-center justify-center rounded-full bg-[#3b7fd6]">
      <svg viewBox="0 0 10 10" className="size-[9px]">
        <path d="M5 0v10M0 5h10" stroke="#fff" strokeWidth="1.500" />
      </svg>
      <span className="absolute -top-px -right-px size-[7px] rounded-full bg-[#cf2e2e]" />
    </button>
  </div>
);

const StatusBar = () => (
  <footer className="relative flex h-[22px] shrink-0 border-t border-[#161616] bg-linear-to-b from-[#989898] to-[#7a7a7a]">
    <div className="flex w-[217px] items-center border-r border-[#5b5b5b] pt-1 pl-3 font-['Liberation_Mono',monospace] text-[10px] text-[#717171]">
      4005.6233, 1451.2523, 0.0000
    </div>
    {drafting.map((d) => (
      <StatusButton key={d.name} name={d.name} on={d.on} />
    ))}
    <div className="ml-auto flex">
      <button type="button" className="w-[30px] border-x border-[#5b5b5b] bg-[#b0b0b0] text-xs text-black">
        模型
      </button>
      <StatusButton name="qvl" />
      <StatusButton name="qvd" className="mr-[18px] w-[23px]" />
      <StatusButton name="tool" className="w-[26px]" />
      <StatusButton name="tool" className="w-[98px]" />
      <StatusButton name="padlock" />
      <StatusButton name="hardware" />
      <StatusButton name="bulb" className="w-[31px] border-l" />
      <button type="button" aria-label="状态栏菜单" className="flex w-3 items-center justify-center bg-[#a5a5a5]">
        <Arrow className="border-x-3 border-t-4 border-t-black" />
      </button>
      <StatusButton name="clean" className="mr-px w-[24px] border-l" />
    </div>
    <SpeedBall />
  </footer>
);

const WLogo = () => (
  <svg viewBox="0 0 32 32" className="size-8 shrink-0">
    <circle cx="16" cy="16" r="15.500" fill="#e85c1a" stroke="#b63e0c" />
    <path d="M4 10q12-14 24 0-12-3-24 0z" fill="#f7a477" />
    <path d="M7 11l4 11 5-9 5 9 4-11M9 25q7 4 14 0" fill="none" stroke="#fff" strokeWidth="2.500" strokeLinejoin="round" strokeLinecap="round" />
    <circle cx="16" cy="10" r="1.600" fill="#fff" />
    <circle cx="7" cy="10" r="1.600" fill="#fff" />
    <circle cx="25" cy="10" r="1.600" fill="#fff" />
  </svg>
);

const RarLogo = () => (
  <svg viewBox="0 0 32 26" className="h-[26px] w-8 shrink-0">
    {[
      ["#a04a8c", "#6d2a5e", 1],
      ["#2430d8", "#121a86", 9],
      ["#1f9a2b", "#0c5a14", 17],
    ].map(([a, b, y]) => (
      <g key={String(y)} transform={`translate(0 ${y})`}>
        <path d="M3 0h21l7 3v5H9L1 5z" fill={String(a)} stroke="#1a1a1a" strokeWidth=".6" />
        <path d="M1 2l8 3v3L1 5z" fill="#e8e2d0" />
        <path d="M9 5.500h22V8H9z" fill={String(b)} />
      </g>
    ))}
    <path d="M16 0l5 4v21h-4V5z" fill="#9a6a2a" stroke="#4f3410" strokeWidth=".6" />
    <path d="M17 11h4v4h-4z" fill="#ddd" stroke="#555" strokeWidth=".6" />
  </svg>
);

const PinwheelLogo = () => (
  <svg viewBox="0 0 32 32" className="size-8 shrink-0">
    {["#b53be0", "#f5331f", "#f6e322", "#3ecf6c", "#2f8ef5"].map((c, i) => (
      <path key={c} d="M16 16Q10 8 14 1q9-2 12 4 0 7-10 11z" fill={c} transform={`rotate(${i * 72} 16 16)`} />
    ))}
    <circle cx="16" cy="16" r="2" fill="#fff" />
  </svg>
);

const PaintLogo = () => (
  <svg viewBox="0 0 30 32" className="h-8 w-[30px] shrink-0">
    <path d="M2 18Q4 6 16 6q11 1 11 9t-8 7q-4 0-3 4-1 4-7 3-8-2-7-11z" fill="#cfe6f2" stroke="#7299ad" />
    <circle cx="8" cy="14" r="2.500" fill="#e8493a" />
    <circle cx="15" cy="11" r="2.500" fill="#49a846" />
    <circle cx="7" cy="21" r="2.500" fill="#3977c8" />
    <circle cx="21" cy="13" r="2" fill="#edc02e" />
    <path d="M14 31l9-22 3 1-9 21z" fill="#e79a34" stroke="#8a5210" strokeWidth=".6" />
    <path d="M22 9q0-7 6-8 2 5-2 9z" fill="#9a5a2a" />
  </svg>
);

const AcadLogo = () => (
  <svg viewBox="0 0 32 32" className="size-8 shrink-0">
    <path d="M0 3h31v21H0z" fill="#161616" />
    <path d="M0 24h31v7H0z" fill="#d40f14" />
    <path d="M18 3h13v16z" fill="#4a4a4a" />
    <path d="M10 0h8l7 20-6 2-2-4-6 1-2 6-5-2zM13 7l-2 8 5-1z" fill="#e9e9e9" stroke="#8a8a8a" strokeWidth=".6" />
    <path d="M10 0l-6 23-3-1z" fill="#9c9c9c" />
  </svg>
);

const FolderLogo = () => (
  <svg viewBox="0 0 26 32" className="h-8 w-[26px] shrink-0">
    <path d="M2 2l8-1v24l-8 5z" fill="#e9cf74" />
    <path d="M4 3l10 2v26L4 28z" fill="#f8e69b" stroke="#cfae4b" strokeWidth=".6" />
    <path d="M14 6l6-2v20l-6 7z" fill="#eccb61" />
    <path d="M20 22l3 2-6 6z" fill="#8fc3e6" />
  </svg>
);

const Task = ({ label, active, grouped, children }: { label: string; active?: boolean; grouped?: boolean; children: ReactNode }) => (
  <button
    type="button"
    className={clsx(
      "flex h-[39px] items-center gap-1 overflow-hidden border border-[#4a5a70] px-[6px] text-xs whitespace-nowrap text-white shadow-[inset_0_0_0_1px_rgba(255,255,255,.45)]",
      grouped ? "w-[121px] [&+&]:border-l-0" : "w-[120px] rounded-[3px]",
      active ? "bg-linear-to-b from-[#c9d2dd] to-[#a9b5c5]" : "bg-linear-to-br from-[#b9c5d4] via-[#94a4b8] to-[#8b9cb2]",
    )}>
    {children}
    {label}
  </button>
);

const Pin = ({ label, className, children }: { label: string; className: string; children: ReactNode }) => (
  <button type="button" aria-label={label} className={clsx("flex items-center justify-center", className)}>
    {children}
  </button>
);

const trayIcons = ["shield", "plus360", "download", "birdtray", "runner", "guard", "speaker", "wtray", "network"];

const Taskbar = () => (
  <div className="flex h-10 shrink-0 items-stretch bg-[#8193ab]">
    <Pin label="开始" className="w-[54px]">
      <svg viewBox="0 0 34 34" className="size-[34px]">
        <defs>
          <radialGradient id="orb" cx=".5" cy=".85" r=".9">
            <stop offset="0" stopColor="#39c4ee" />
            <stop offset=".5" stopColor="#1c5b8f" />
            <stop offset="1" stopColor="#a9c1d4" />
          </radialGradient>
        </defs>
        <circle cx="17" cy="17" r="16.500" fill="url(#orb)" stroke="#2a4a68" />
        <path d="M9 10q4-3 8-1l-2 7q-4-2-8 0z" fill="#ee5a24" />
        <path d="M18 9q4 2 8-1l-2 8q-4 2-8 0z" fill="#86c440" />
        <path d="M7 18q4-2 8 0l-2 7q-3-2-8 0z" fill="#3aa0e8" />
        <path d="M16 18q4 2 8 0l-2 7q-4 2-8 0z" fill="#fbc62a" />
      </svg>
    </Pin>
    <Pin label="360" className="w-[61px]">
      <svg viewBox="0 0 32 32" className="size-8">
        <path d="M15 14Q2 18 1 8q2-7 5-5 3 4 7 3 4 3 2 8z" fill="#86c81e" />
        <path d="M17 14Q11 4 20 1t11 9q-3 7-14 4z" fill="#3c92e8" />
        <path d="M17 18q4-4 9-1 7 2 5 9-5 6-10 4-7-3-4-12z" fill="#e2553f" />
        <path d="M15 18q4 10-4 13T1 22q-1-4 3-4 3 2 6 1 3-3 5-1z" fill="#f4b80e" />
      </svg>
    </Pin>
    <Pin label="浏览器" className="w-[63px]">
      <span className="flex h-8 w-8 items-center justify-center bg-linear-to-b from-[#2fd058] to-[#0bb57c]">
        <svg viewBox="0 0 32 32" className="size-8" fill="none" stroke="#fff" strokeWidth="5.500">
          <path d="M6 17H25.500Q25 6.500 16 6.500T6.500 16q0 10 10 10 5 0 8-3" />
        </svg>
      </span>
    </Pin>
    <Pin label="美人鱼" className="mr-[2px] w-[56px]">
      <svg viewBox="0 0 32 32" className="size-8">
        <path d="M0 0h32v32H0z" fill="#fff200" />
        <path d="M17 3q5-3 10-2-2 6 0 10 0 4-3 6 6 5 3 10-6 6-12 2l-4-4-6 5 0-4-4-1q6-2 11 1 6 4 7 0-7-6-3-12l-2-2q1-4 3-9z" fill="#0a10f0" />
      </svg>
    </Pin>
    <div className="flex min-w-0 items-center gap-[2px]">
      <div className="flex">
        <Task label="WXRPT_W..."><WLogo /></Task>
        <Task label="万象网管"><WLogo /></Task>
      </div>
      <Pin label="Internet Explorer" className="w-[58px]">
        <svg viewBox="0 0 32 32" className="size-8" fill="none">
          <path d="M6 17h19q0-10-9-10t-9 9q0 10 9.500 10 5 0 7.500-4" stroke="#1673b8" strokeWidth="6" />
          <path d="M6 14q1-9 10-9t10 9" stroke="#4db4ea" strokeWidth="2" />
          <path d="M3 30Q-2 24 12 11T31 3q0 3-3 7" stroke="#f3b92b" strokeWidth="2.500" />
        </svg>
      </Pin>
      <Task label="CaTICs 网..."><PinwheelLogo /></Task>
      <Task label="迅雷">
        <span className="size-[31px] shrink-0 rounded-[4px] bg-[#f2f7ff] p-[2px]"><Bird /></span>
      </Task>
      <Pin label="传奇" className="w-[58px]">
        <span className="flex size-8 items-center justify-center rounded-[6px] bg-[#1c1210]">
          <svg viewBox="0 0 32 32" className="size-8" fill="none" stroke="#f7b416" strokeWidth="2">
            <path d="M7 3L2 12M5 9v12M8 5h8M12 2v14M8 8h8v5H8zM8 18l9-2M13 15v6" />
            <path d="M19 14l9 1M25 10l-6 10M18 21l12 1M21 24h4v4h-4zM28 21v9" stroke="#f08a12" />
            <path d="M4 24h4v6H4z" fill="#2c6dbd" stroke="#8b2018" />
          </svg>
        </span>
      </Pin>
      <div className="flex">
        <Task grouped label="662613e2..."><RarLogo /></Task>
        <Task grouped label="662613e2..."><RarLogo /></Task>
        <Task grouped label="辽宁科技大..."><RarLogo /></Task>
      </div>
      <Task label="无标题 - ..."><PaintLogo /></Task>
      <Task active label="AutoCAD ..."><AcadLogo /></Task>
      <Task label="CAD考试">
        <span className="mr-[6px]"><FolderLogo /></span>
      </Task>
    </div>
    <div className="ml-auto flex shrink-0 items-center">
      <Tool name="keyboard" className="mr-[6px] w-6" />
      {trayIcons.map((n) => (
        <Tool key={n} name={n} className="w-6" />
      ))}
      <time className="ml-2 w-[68px] text-center text-xs leading-[18px] text-white">
        19:24
        <br />
        2016/12/4
      </time>
      <button type="button" aria-label="显示桌面" className="ml-[5px] w-[14px] self-stretch border border-[#3e4e63] bg-linear-to-br from-[#a8b7c9] to-[#5c6e86]" />
    </div>
  </div>
);

export default function App() {
  return (
    <div className="relative flex h-screen flex-col overflow-hidden bg-[#686868] font-['Open_Sans','Noto_Sans_CJK_SC',sans-serif]">
      <Header />
      <div className="absolute top-3 right-[112px] z-10 size-[58px] rounded-full bg-white shadow-md">
        <Bird />
      </div>
      <Toolbars />
      <div className="flex min-h-0 flex-1 items-stretch">
        <div className="mr-1">
          <SideBar label="绘图">
            {drawTools.map((n) => (
              <SideTool key={n} name={n} />
            ))}
          </SideBar>
        </div>
        <ModelSpace />
        <div className="mr-[3px] ml-1 flex flex-col gap-px">
          <SideBar label="修改">
            {modifyTools.map((n) => (
              <SideTool key={n} name={n} />
            ))}
          </SideBar>
          <SideBar label="绘图次序">
            {["front", "back", "above", "under"].map((n) => (
              <SideTool key={n} name={n} />
            ))}
            <span className="mx-[2px] my-[2px] h-px bg-[#8a8a8a]" />
            <button type="button" className="flex h-[22px] flex-col items-center justify-center font-['Liberation_Mono',monospace] text-[8px] leading-[8px] font-bold">
              ABC
              <span className="h-[6px] w-[14px] border border-t-0 border-[#333]" />
            </button>
            <SideTool name="hatchback" />
          </SideBar>
        </div>
      </div>
      <CommandLine />
      <StatusBar />
      <Taskbar />
    </div>
  );
}
